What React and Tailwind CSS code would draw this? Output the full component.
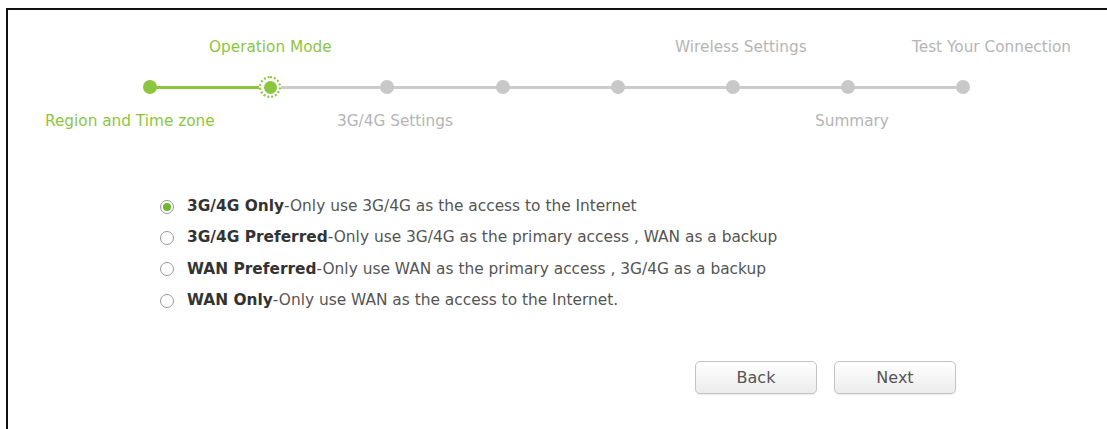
import React from 'react';

const DOTS = [142, 262, 379, 495, 610, 725, 840, 955];

const TOP_LABELS = [
  { left: 201, text: 'Operation Mode', on: true },
  { left: 667, text: 'Wireless Settings' },
  { left: 904, text: 'Test Your Connection' },
];

const BOTTOM_LABELS = [
  { left: 37, text: 'Region and Time zone', on: true },
  { left: 329, text: '3G/4G Settings' },
  { left: 807, text: 'Summary' },
];

const OPTIONS = [
  { id: '3g', bold: '3G/4G Only', rest: '-Only use 3G/4G as the access to the Internet', checked: true },
  { id: '3gp', bold: '3G/4G Preferred', rest: '-Only use 3G/4G as the primary access , WAN as a backup' },
  { id: 'wanp', bold: 'WAN Preferred', rest: '-Only use WAN as the primary access , 3G/4G as a backup' },
  { id: 'wan', bold: 'WAN Only', rest: '-Only use WAN as the access to the Internet.' },
];

function Stepper() {
  return (
    <div className="relative h-[140px]">
      {/* lines */}
      <div className="absolute top-[76px] h-[3px] bg-[#8cc63f]" style={{ left: DOTS[0], width: DOTS[1] - DOTS[0] }} />
      <div className="absolute top-[76px] h-[3px] bg-[#cccccc]" style={{ left: DOTS[1], width: DOTS[7] - DOTS[1] }} />

      {DOTS.map((x, i) => (
        <div key={x} className="absolute top-[77px] -translate-x-1/2 -translate-y-1/2" style={{ left: x }}>
          {i === 1 ? (
            <div className="w-[22px] h-[22px] rounded-full border-2 border-dotted border-[#8cc63f] bg-white flex items-center justify-center">
              <div className="w-[13px] h-[13px] rounded-full bg-[#8cc63f]" />
            </div>
          ) : (
            <div className={`w-[14px] h-[14px] rounded-full ${i === 0 ? 'bg-[#8cc63f]' : 'bg-[#c8c8c8]'}`} />
          )}
        </div>
      ))}

      {TOP_LABELS.map(l => (
        <span key={l.text}
          className={`absolute top-[28px] whitespace-nowrap text-[15.3px] leading-[18px] ${l.on ? 'text-[#8cc63f]' : 'text-[#b5b5b5]'}`}
          style={{ left: l.left }}>
          {l.text}
        </span>
      ))}
      {BOTTOM_LABELS.map(l => (
        <span key={l.text}
          className={`absolute top-[102px] whitespace-nowrap text-[15.3px] leading-[18px] ${l.on ? 'text-[#8cc63f]' : 'text-[#b5b5b5]'}`}
          style={{ left: l.left }}>
          {l.text}
        </span>
      ))}
    </div>
  );
}

function Radio({ checked }) {
  return (
    <span className="w-[14px] h-[14px] rounded-full border border-[#999] bg-white flex items-center justify-center shrink-0">
      {checked && <span className="w-[8px] h-[8px] rounded-full bg-[#74b530]" />}
    </span>
  );
}

export default function App() {
  return (
    <div className="w-[1107px] h-[429px] bg-white overflow-hidden pt-[8px] pl-[6px]"
      style={{ fontFamily: '"DejaVu Sans", Verdana, sans-serif' }}>
      <div className="h-full border-t-2 border-l-2 border-[#111]">
        <Stepper />

        {/* Mode options */}
        <div className="mt-[41px] pl-[152px] flex flex-col">
          {OPTIONS.map(o => (
            <label key={o.id} className="h-[31.3px] flex items-center gap-[13px] text-[15.4px] text-[#555]">
              <Radio checked={o.checked} />
              <span className="whitespace-nowrap">
                <b className="font-bold text-[#333]">{o.bold}</b>{o.rest}
              </span>
            </label>
          ))}
        </div>

        {/* Buttons */}
        <div className="mt-[45px] pl-[687px] flex gap-[17px]">
          {['Back', 'Next'].map(t => (
            <button key={t}
              className="w-[122px] h-[33px] rounded-[5px] border border-[#c4c4c4] bg-gradient-to-b from-white to-[#ececec] text-[16px] text-[#555] shadow-[0_1px_1px_rgba(0,0,0,0.08)]">
              {t}
            </button>
          ))}
        </div>
      </div>
    </div>
  );
}
